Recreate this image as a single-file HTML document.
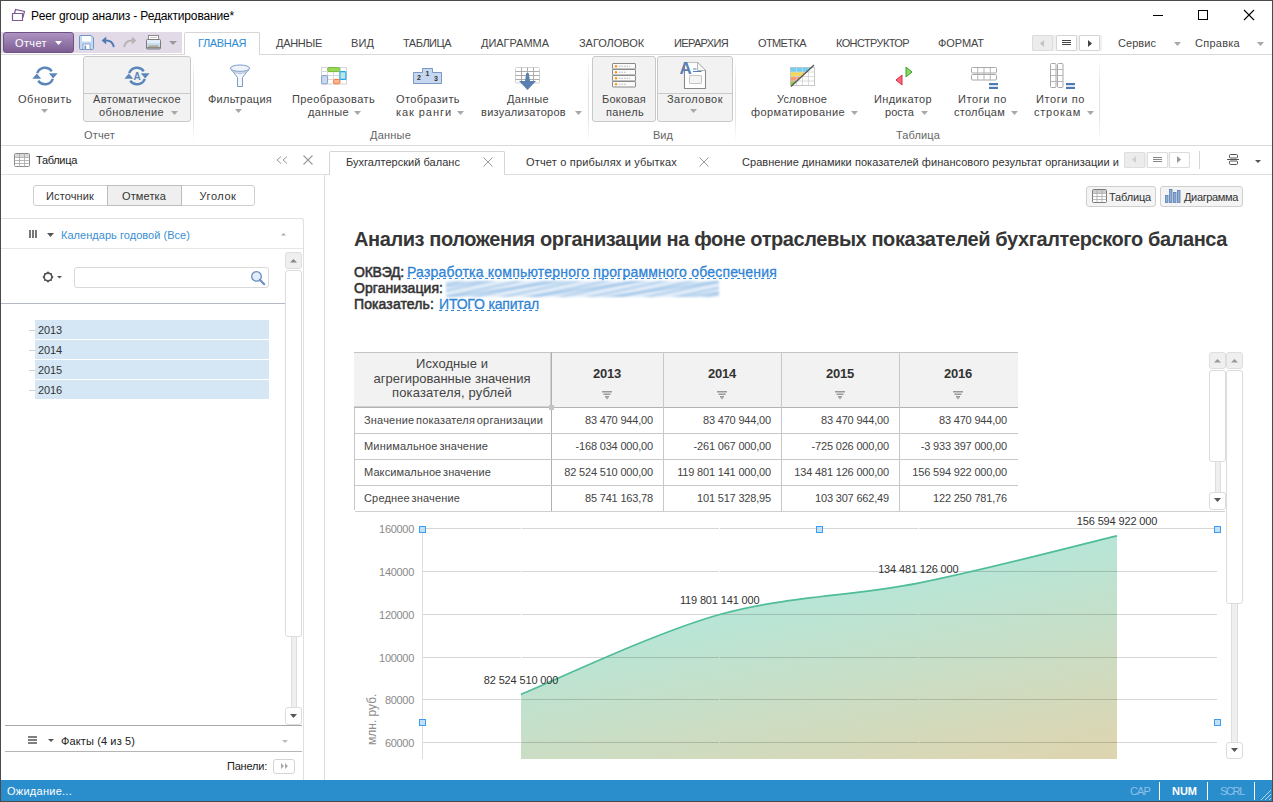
<!DOCTYPE html><html><head><meta charset='utf-8'><style>
*{margin:0;padding:0;box-sizing:border-box}
html,body{width:1273px;height:802px;overflow:hidden;background:#fff;font-family:"Liberation Sans",sans-serif}
.a{position:absolute}
.t{white-space:nowrap}
svg{overflow:visible}
</style></head><body>
<svg class="a" style="left:10px;top:7px" width="16" height="15" viewBox="0 0 16 15"><path d="M2.5 6.5h10v7h-10z" fill="none" stroke="#7d5a94" stroke-width="1.2"/><path d="M4.5 6.5l1-4 9 2-1.6 6" fill="none" stroke="#7d5a94" stroke-width="1.2"/></svg>
<div class="a t" style="left:31px;top:9.84px;font-size:12px;line-height:12px;color:#000;font-weight:400;"><span id="t1" style="letter-spacing:-0.161px">Peer group анализ - Редактирование*</span></div>
<div class="a" style="left:1153px;top:15px;width:10px;height:1px;background:#000"></div>
<div class="a" style="left:1198px;top:10px;width:10px;height:10px;border:1px solid #000"></div>
<svg class="a" style="left:1244px;top:10px" width="10" height="10" viewBox="0 0 10 10"><path d="M0 0L10 10M10 0L0 10" stroke="#000" stroke-width="1.1"/></svg>
<div class="a" style="left:1px;top:32px;width:181px;height:21px;background:#e3dae7"></div>
<div class="a" style="left:3px;top:32px;width:71px;height:21px;background:linear-gradient(#ad93c1,#7d5d93);border:1px solid #6f5285;border-radius:3px"></div>
<div class="a t" style="left:15px;top:37.69px;font-size:11px;line-height:11px;color:#fff;font-weight:400;"><span id="t2" style="letter-spacing:0.375px">Отчет</span></div>
<svg class="a" style="left:55px;top:41px" width="7" height="5" viewBox="0 0 7 5"><path d="M0 0H7L3.5 4.0Z" fill="#fff"/></svg>
<svg class="a" style="left:79px;top:35px" width="15" height="15" viewBox="0 0 15 15"><path d="M1.5 0.5H12L14.5 3V13.5Q14.5 14.5 13.5 14.5H1.5Q0.5 14.5 0.5 13.5V1.5Q0.5 0.5 1.5 0.5Z" fill="#c5d9f0" stroke="#6f95c6" stroke-width="1"/><rect x="3" y="1" width="9" height="5.5" fill="#fff"/><rect x="4" y="9" width="7" height="5.5" fill="#fff" stroke="#6f95c6" stroke-width="0.8"/><rect x="5.5" y="10.5" width="1.6" height="3.5" fill="#6f95c6"/></svg>
<svg class="a" style="left:101px;top:36px" width="14" height="12" viewBox="0 0 14 12"><path d="M12.8 11.2C12 6.5 9 4.2 4 4.6" fill="none" stroke="#4f7cb2" stroke-width="1.9"/><path d="M0.6 4.6L5.2 0.6V8.6Z" fill="#4f7cb2"/></svg>
<svg class="a" style="left:123px;top:36px" width="14" height="12" viewBox="0 0 14 12"><path d="M1.2 11.2C2 6.5 5 4.2 10 4.6" fill="none" stroke="#b5b5b5" stroke-width="1.9"/><path d="M13.4 4.6L8.8 0.6V8.6Z" fill="#b5b5b5"/></svg>
<svg class="a" style="left:146px;top:35px" width="15" height="15" viewBox="0 0 15 15"><rect x="2.5" y="0.5" width="10" height="5" fill="#fff" stroke="#8a8a8a"/><path d="M4 2.5H11" stroke="#ccc"/><rect x="0.5" y="4.5" width="14" height="9.5" rx="1" fill="#c9dcf2" stroke="#7a7a7a"/><rect x="1" y="5" width="13" height="3" fill="#e3edf9"/><rect x="2.5" y="10.5" width="10" height="1.2" fill="#a8946a"/><rect x="1" y="12" width="13" height="1.5" fill="#8d8d8d"/></svg>
<svg class="a" style="left:169px;top:41px" width="8" height="5" viewBox="0 0 8 5"><path d="M0 0H8L4.0 4.0Z" fill="#9a9a9a"/></svg>
<div class="a" style="left:1px;top:54px;width:1271px;height:1px;background:#dadada"></div>
<div class="a" style="left:184px;top:32px;width:76px;height:23px;background:#fff;border:1px solid #d6d6d6;border-bottom:none;border-radius:2px 2px 0 0"></div>
<div class="a t" style="left:198px;top:37.69px;font-size:11px;line-height:11px;color:#2d8bd2;font-weight:400;"><span id="t3" style="letter-spacing:-0.353px">ГЛАВНАЯ</span></div>
<div class="a t" style="left:276px;top:37.69px;font-size:11px;line-height:11px;color:#444;font-weight:400;"><span id="t4" style="letter-spacing:-0.292px">ДАННЫЕ</span></div>
<div class="a t" style="left:351px;top:37.69px;font-size:11px;line-height:11px;color:#444;font-weight:400;"><span id="t5" style="letter-spacing:0.099px">ВИД</span></div>
<div class="a t" style="left:403px;top:37.69px;font-size:11px;line-height:11px;color:#444;font-weight:400;"><span id="t6" style="letter-spacing:-0.502px">ТАБЛИЦА</span></div>
<div class="a t" style="left:481px;top:37.69px;font-size:11px;line-height:11px;color:#444;font-weight:400;"><span id="t7" style="letter-spacing:-0.030px">ДИАГРАММА</span></div>
<div class="a t" style="left:579px;top:37.69px;font-size:11px;line-height:11px;color:#444;font-weight:400;"><span id="t8" style="letter-spacing:-0.052px">ЗАГОЛОВОК</span></div>
<div class="a t" style="left:674px;top:37.69px;font-size:11px;line-height:11px;color:#444;font-weight:400;"><span id="t9" style="letter-spacing:-0.652px">ИЕРАРХИЯ</span></div>
<div class="a t" style="left:758px;top:37.69px;font-size:11px;line-height:11px;color:#444;font-weight:400;"><span id="t10" style="letter-spacing:-0.607px">ОТМЕТКА</span></div>
<div class="a t" style="left:836px;top:37.69px;font-size:11px;line-height:11px;color:#444;font-weight:400;"><span id="t11" style="letter-spacing:-0.609px">КОНСТРУКТОР</span></div>
<div class="a t" style="left:938px;top:37.69px;font-size:11px;line-height:11px;color:#444;font-weight:400;"><span id="t12" style="letter-spacing:-0.083px">ФОРМАТ</span></div>
<div class="a" style="left:1032px;top:35px;width:70px;height:16px;background:#f0f0f0"></div>
<div class="a" style="left:1032px;top:35px;width:21px;height:16px;background:#ececec;border:1px solid #dcdcdc;border-radius:2px"></div>
<div class="a" style="left:1056px;top:35px;width:21px;height:16px;background:#fff;border:1px solid #d4d4d4;border-radius:2px"></div>
<div class="a" style="left:1079px;top:35px;width:21px;height:16px;background:#fff;border:1px solid #d4d4d4;border-radius:2px"></div>
<svg class="a" style="left:1040px;top:40px" width="4" height="7" viewBox="0 0 4 7"><path d="M4 0V7L0 3.5Z" fill="#c4c4c4"/></svg>
<svg class="a" style="left:1062px;top:40px" width="9" height="6" viewBox="0 0 9 6"><path d="M0 0.5H9M0 2.5H9M0 4.5H9" stroke="#444" stroke-width="1"/></svg>
<svg class="a" style="left:1088px;top:40px" width="4" height="7" viewBox="0 0 4 7"><path d="M0 0V7L4 3.5Z" fill="#444"/></svg>
<div class="a t" style="left:1118px;top:37.69px;font-size:11px;line-height:11px;color:#444;font-weight:400;"><span id="t13" style="letter-spacing:0.055px">Сервис</span></div>
<svg class="a" style="left:1174px;top:42px" width="7" height="5" viewBox="0 0 7 5"><path d="M0 0H7L3.5 4.0Z" fill="#a8a8a8"/></svg>
<div class="a t" style="left:1195px;top:37.69px;font-size:11px;line-height:11px;color:#444;font-weight:400;"><span id="t14" style="letter-spacing:0.263px">Справка</span></div>
<svg class="a" style="left:1257px;top:42px" width="7" height="5" viewBox="0 0 7 5"><path d="M0 0H7L3.5 4.0Z" fill="#a8a8a8"/></svg>
<div class="a" style="left:1px;top:145px;width:1271px;height:1px;background:#dadada"></div>
<div class="a" style="left:193px;top:58px;width:1px;height:84px;background:linear-gradient(#fff,#e2e2e2 30%,#e2e2e2 70%,#fff)"></div>
<div class="a" style="left:588px;top:58px;width:1px;height:84px;background:linear-gradient(#fff,#e2e2e2 30%,#e2e2e2 70%,#fff)"></div>
<div class="a" style="left:735px;top:58px;width:1px;height:84px;background:linear-gradient(#fff,#e2e2e2 30%,#e2e2e2 70%,#fff)"></div>
<div class="a" style="left:1099px;top:58px;width:1px;height:84px;background:linear-gradient(#fff,#e2e2e2 30%,#e2e2e2 70%,#fff)"></div>
<svg class="a" style="left:32px;top:65px" width="26" height="22" viewBox="0 0 26 22"><path d="M5.20 8.16A8.3 8.3 0 0 1 19.80 6.24" fill="none" stroke="#5a86ba" stroke-width="2.4"/><path d="M20.80 13.84A8.3 8.3 0 0 1 6.20 15.76" fill="none" stroke="#5a86ba" stroke-width="2.4"/><path d="M16.8 8.2H25.6L21.2 13.6Z" fill="#5a86ba"/><path d="M0.4 13.8H9.2L4.8 8.4Z" fill="#5a86ba"/></svg>
<div class="a t" style="left:18px;top:93.69px;font-size:11px;line-height:11px;color:#444;font-weight:400;"><span id="t15" style="letter-spacing:0.523px">Обновить</span></div>
<svg class="a" style="left:41px;top:109px" width="7" height="5" viewBox="0 0 7 5"><path d="M0 0H7L3.5 4.0Z" fill="#a8a8a8"/></svg>
<div class="a" style="left:83px;top:56px;width:108px;height:66px;background:#f2f2f2;border:1px solid #c9c9c9;border-radius:3px"></div>
<div class="a" style="left:84px;top:93px;width:106px;height:1px;background:#c9c9c9"></div>
<svg class="a" style="left:124px;top:65px" width="26" height="22" viewBox="0 0 26 22"><path d="M5.20 8.16A8.3 8.3 0 0 1 19.80 6.24" fill="none" stroke="#5a86ba" stroke-width="2.4"/><path d="M20.80 13.84A8.3 8.3 0 0 1 6.20 15.76" fill="none" stroke="#5a86ba" stroke-width="2.4"/><path d="M16.8 8.2H25.6L21.2 13.6Z" fill="#5a86ba"/><path d="M0.4 13.8H9.2L4.8 8.4Z" fill="#5a86ba"/><text x="13" y="15" font-size="10" font-weight="700" text-anchor="middle" fill="#5a86ba" font-family="Liberation Sans">A</text></svg>
<div class="a t" style="left:93px;top:93.69px;font-size:11px;line-height:11px;color:#444;font-weight:400;"><span id="t16" style="letter-spacing:0.348px">Автоматическое</span></div>
<div class="a t" style="left:99px;top:106.69px;font-size:11px;line-height:11px;color:#444;font-weight:400;"><span id="t17" style="letter-spacing:0.392px">обновление</span></div>
<svg class="a" style="left:171px;top:111px" width="7" height="5" viewBox="0 0 7 5"><path d="M0 0H7L3.5 4.0Z" fill="#a8a8a8"/></svg>
<div class="a t" style="left:84px;top:129.69px;font-size:11px;line-height:11px;color:#666;font-weight:400;"><span id="t18" style="letter-spacing:0.175px">Отчет</span></div>
<svg class="a" style="left:229px;top:64px" width="22" height="24" viewBox="0 0 22 24"><path d="M1.5 4.5L8.5 13.5V22.5H13.5V13.5L20.5 4.5" fill="#f3f6fb" stroke="#7d9cc4" stroke-width="1"/><ellipse cx="11" cy="4.2" rx="9.5" ry="3.2" fill="#eef3fa" stroke="#7d9cc4" stroke-width="1"/><path d="M2.5 6.2Q11 10 19.5 6.2M4 8.3Q11 11 18 8.3" fill="none" stroke="#9fb6d6" stroke-width="0.8"/></svg>
<div class="a t" style="left:208px;top:93.69px;font-size:11px;line-height:11px;color:#444;font-weight:400;"><span id="t19" style="letter-spacing:0.252px">Фильтрация</span></div>
<svg class="a" style="left:235px;top:109px" width="7" height="5" viewBox="0 0 7 5"><path d="M0 0H7L3.5 4.0Z" fill="#a8a8a8"/></svg>
<svg class="a" style="left:320px;top:66px" width="27" height="19" viewBox="0 0 27 19"><rect x="1.5" y="1.5" width="25" height="16.5" fill="#fff" stroke="#d4d4d4"/><path d="M1.5 5.5H26.5M1.5 9.5H26.5M1.5 13.5H26.5M7.5 1.5V18M13.5 1.5V18M20 1.5V18" stroke="#dadada"/><rect x="7.8" y="1.6" width="12" height="4" rx="1" fill="#9ad85c" stroke="#6cb92c" stroke-width="0.9"/><rect x="19.9" y="5.6" width="6" height="7.8" rx="1" fill="#b9e6ec" stroke="#27a6ea" stroke-width="1.1"/><rect x="1.6" y="9.6" width="6" height="8.2" rx="1" fill="#c9d9ef" stroke="#7897c4" stroke-width="0.9"/><rect x="13.6" y="13.4" width="6.2" height="4.4" rx="1" fill="#fbb58f" stroke="#f2702e" stroke-width="0.9"/></svg>
<div class="a t" style="left:292px;top:93.69px;font-size:11px;line-height:11px;color:#444;font-weight:400;"><span id="t20" style="letter-spacing:0.379px">Преобразовать</span></div>
<div class="a t" style="left:308px;top:106.69px;font-size:11px;line-height:11px;color:#444;font-weight:400;"><span id="t21" style="letter-spacing:0.380px">данные</span></div>
<svg class="a" style="left:354px;top:111px" width="7" height="5" viewBox="0 0 7 5"><path d="M0 0H7L3.5 4.0Z" fill="#a8a8a8"/></svg>
<svg class="a" style="left:413px;top:68px" width="30" height="17" viewBox="0 0 30 17"><path d="M0.5 4.5H9.5V0.5H19.5V4.5H28.5V15.5H0.5Z" fill="#c6d7f0" stroke="#7b97c2" stroke-width="1"/><text x="4" y="12" font-size="7" font-weight="700" fill="#333" font-family="Liberation Sans">2</text><text x="12.5" y="8" font-size="7" font-weight="700" fill="#333" font-family="Liberation Sans">1</text><text x="21" y="13" font-size="7" font-weight="700" fill="#333" font-family="Liberation Sans">3</text></svg>
<div class="a t" style="left:396px;top:93.69px;font-size:11px;line-height:11px;color:#444;font-weight:400;"><span id="t22" style="letter-spacing:0.403px">Отобразить</span></div>
<div class="a t" style="left:396px;top:106.69px;font-size:11px;line-height:11px;color:#444;font-weight:400;"><span id="t23" style="letter-spacing:0.943px">как ранги</span></div>
<svg class="a" style="left:457px;top:111px" width="7" height="5" viewBox="0 0 7 5"><path d="M0 0H7L3.5 4.0Z" fill="#a8a8a8"/></svg>
<svg class="a" style="left:515px;top:67px" width="26" height="25" viewBox="0 0 26 25"><rect x="0.5" y="0.5" width="24" height="15.5" rx="1" fill="#fff" stroke="#d2d2d2"/><path d="M0.5 4.5H24.5M0.5 8.5H24.5M0.5 12.5H24.5M6.5 0.5V16M12.5 0.5V16M18.5 0.5V16" stroke="#acacac"/><path d="M11.3 6H13.7L15 14H21L12.5 23L4 14H10Z" fill="#5a80b2"/></svg>
<div class="a t" style="left:507px;top:93.69px;font-size:11px;line-height:11px;color:#444;font-weight:400;"><span id="t24" style="letter-spacing:0.375px">Данные</span></div>
<div class="a t" style="left:481px;top:106.69px;font-size:11px;line-height:11px;color:#444;font-weight:400;"><span id="t25" style="letter-spacing:0.286px">визуализаторов</span></div>
<svg class="a" style="left:575px;top:111px" width="7" height="5" viewBox="0 0 7 5"><path d="M0 0H7L3.5 4.0Z" fill="#a8a8a8"/></svg>
<div class="a t" style="left:370px;top:129.69px;font-size:11px;line-height:11px;color:#666;font-weight:400;"><span id="t26" style="letter-spacing:0.208px">Данные</span></div>
<div class="a" style="left:592px;top:56px;width:64px;height:66px;background:#f2f2f2;border:1px solid #c9c9c9;border-radius:3px"></div>
<div class="a" style="left:657px;top:56px;width:76px;height:66px;background:#f2f2f2;border:1px solid #c9c9c9;border-radius:3px"></div>
<div class="a" style="left:658px;top:93px;width:74px;height:1px;background:#c9c9c9"></div>
<svg class="a" style="left:612px;top:63px" width="24" height="25" viewBox="0 0 24 25"><rect x="0.5" y="0.5" width="23" height="5.5" rx="0.5" fill="#fafafa" stroke="#8a8a8a" stroke-width="1"/><circle cx="4" cy="3.25" r="1.2" fill="#f39a1b"/><path d="M7 3.25H18" stroke="#aaa" stroke-width="0.8" stroke-dasharray="1.5 1"/><rect x="0.5" y="6.5" width="23" height="5.5" rx="0.5" fill="#fafafa" stroke="#8a8a8a" stroke-width="1"/><circle cx="4" cy="9.25" r="1.2" fill="#f39a1b"/><path d="M7 9.25H14" stroke="#aaa" stroke-width="0.8" stroke-dasharray="1.5 1"/><rect x="0.5" y="12.5" width="23" height="5.5" rx="0.5" fill="#fafafa" stroke="#8a8a8a" stroke-width="1"/><circle cx="4" cy="15.25" r="1.2" fill="#f39a1b"/><path d="M7 15.25H18" stroke="#aaa" stroke-width="0.8" stroke-dasharray="1.5 1"/><rect x="0.5" y="18.5" width="23" height="5.5" rx="0.5" fill="#fafafa" stroke="#8a8a8a" stroke-width="1"/><circle cx="4" cy="21.25" r="1.2" fill="#f39a1b"/><path d="M7 21.25H14" stroke="#aaa" stroke-width="0.8" stroke-dasharray="1.5 1"/></svg>
<svg class="a" style="left:679px;top:61px" width="28" height="29" viewBox="0 0 28 29"><path d="M5.5 1.5H18.5L26.5 9.5V27.5H5.5Z" fill="#fff" stroke="#8a8a8a" stroke-width="1.1"/><path d="M5.5 1.5H18.5" stroke="#c4c4c4" stroke-width="1.2"/><path d="M18.5 1.5V9.5H26.5" fill="#f7f7f7" stroke="#b5b5b5"/><rect x="10.5" y="14.5" width="12" height="8" rx="0.5" fill="#f4f4f4" stroke="#c6c6c6"/><text x="0.6" y="12.7" font-size="17" font-weight="700" fill="#5a80b2" font-family="Liberation Sans">A</text><path d="M14 8H17.5M14 10.5H22.5" stroke="#5a80b2" stroke-width="1.1"/></svg>
<div class="a t" style="left:602px;top:93.69px;font-size:11px;line-height:11px;color:#444;font-weight:400;"><span id="t27" style="letter-spacing:0.259px">Боковая</span></div>
<div class="a t" style="left:606px;top:106.69px;font-size:11px;line-height:11px;color:#444;font-weight:400;"><span id="t28" style="letter-spacing:0.323px">панель</span></div>
<div class="a t" style="left:667px;top:93.69px;font-size:11px;line-height:11px;color:#444;font-weight:400;"><span id="t29" style="letter-spacing:0.476px">Заголовок</span></div>
<svg class="a" style="left:690px;top:109px" width="7" height="5" viewBox="0 0 7 5"><path d="M0 0H7L3.5 4.0Z" fill="#a8a8a8"/></svg>
<div class="a t" style="left:653px;top:129.69px;font-size:11px;line-height:11px;color:#666;font-weight:400;"><span id="t30" style="letter-spacing:0.031px">Вид</span></div>
<svg class="a" style="left:789px;top:64px" width="27" height="23" viewBox="0 0 27 23"><defs><clipPath id="cfc"><path d="M1.5 3.5H23.5L1.5 22.5Z"/></clipPath></defs><rect x="1.5" y="3.5" width="24" height="18" fill="#fff" stroke="#c6c6c6"/><g clip-path="url(#cfc)"><rect x="1.5" y="3.5" width="24" height="4.5" fill="#6fd0f3"/><rect x="1.5" y="8" width="24" height="4.5" fill="#f5da55"/><rect x="1.5" y="12.5" width="24" height="4.5" fill="#f89b70"/><rect x="1.5" y="17" width="24" height="4.5" fill="#8fc94a"/></g><path d="M1.5 8H25.5M1.5 12.5H25.5M1.5 17H25.5M7.5 3.5V21.5M13.5 3.5V21.5M19.5 3.5V21.5" stroke="#d0d0d0" stroke-width="0.8"/><path d="M2 22.5L25 1" stroke="#555" stroke-width="1.3"/></svg>
<div class="a t" style="left:777px;top:93.69px;font-size:11px;line-height:11px;color:#444;font-weight:400;"><span id="t31" style="letter-spacing:0.178px">Условное</span></div>
<div class="a t" style="left:751px;top:106.69px;font-size:11px;line-height:11px;color:#444;font-weight:400;"><span id="t32" style="letter-spacing:0.405px">форматирование</span></div>
<svg class="a" style="left:851px;top:111px" width="7" height="5" viewBox="0 0 7 5"><path d="M0 0H7L3.5 4.0Z" fill="#a8a8a8"/></svg>
<svg class="a" style="left:895px;top:66px" width="18" height="20" viewBox="0 0 18 20"><path d="M7 9V19L1 14Z" fill="#f36b7a" stroke="#d92c42" stroke-width="1"/><path d="M11 1V11L17 6Z" fill="#8bd36a" stroke="#3da42c" stroke-width="1"/></svg>
<div class="a t" style="left:874px;top:93.69px;font-size:11px;line-height:11px;color:#444;font-weight:400;"><span id="t33" style="letter-spacing:0.375px">Индикатор</span></div>
<div class="a t" style="left:885px;top:106.69px;font-size:11px;line-height:11px;color:#444;font-weight:400;"><span id="t34" style="letter-spacing:0.044px">роста</span></div>
<svg class="a" style="left:921px;top:111px" width="7" height="5" viewBox="0 0 7 5"><path d="M0 0H7L3.5 4.0Z" fill="#a8a8a8"/></svg>
<svg class="a" style="left:970px;top:66px" width="30" height="24" viewBox="0 0 30 24"><g fill="#fff" stroke="#a8a8a8" stroke-width="1"><rect x="1.5" y="1.5" width="25" height="5.5" rx="1"/><rect x="1.5" y="8.5" width="25" height="5.5" rx="1"/></g><path d="M7.75 1.5V14M14 1.5V14M20.25 1.5V14" stroke="#b5b5b5"/><rect x="19" y="17" width="9" height="2.2" fill="#4f79b1"/><rect x="19" y="20.8" width="9" height="2.2" fill="#4f79b1"/></svg>
<div class="a t" style="left:958px;top:93.69px;font-size:11px;line-height:11px;color:#444;font-weight:400;"><span id="t35" style="letter-spacing:0.596px">Итоги по</span></div>
<div class="a t" style="left:954px;top:106.69px;font-size:11px;line-height:11px;color:#444;font-weight:400;"><span id="t36" style="letter-spacing:0.250px">столбцам</span></div>
<svg class="a" style="left:1011px;top:111px" width="7" height="5" viewBox="0 0 7 5"><path d="M0 0H7L3.5 4.0Z" fill="#a8a8a8"/></svg>
<svg class="a" style="left:1049px;top:62px" width="28" height="28" viewBox="0 0 28 28"><g fill="#fff" stroke="#a8a8a8" stroke-width="1"><rect x="1.5" y="1.5" width="5.5" height="24" rx="1"/><rect x="8.5" y="1.5" width="5.5" height="24" rx="1"/></g><path d="M1.5 7.5H14M1.5 13.5H14M1.5 19.5H14" stroke="#b5b5b5"/><rect x="17" y="21" width="9" height="2.2" fill="#4f79b1"/><rect x="17" y="24.8" width="9" height="2.2" fill="#4f79b1"/></svg>
<div class="a t" style="left:1036px;top:93.69px;font-size:11px;line-height:11px;color:#444;font-weight:400;"><span id="t37" style="letter-spacing:0.596px">Итоги по</span></div>
<div class="a t" style="left:1034px;top:106.69px;font-size:11px;line-height:11px;color:#444;font-weight:400;"><span id="t38" style="letter-spacing:0.783px">строкам</span></div>
<svg class="a" style="left:1087px;top:111px" width="7" height="5" viewBox="0 0 7 5"><path d="M0 0H7L3.5 4.0Z" fill="#a8a8a8"/></svg>
<div class="a t" style="left:896px;top:129.69px;font-size:11px;line-height:11px;color:#666;font-weight:400;"><span id="t39" style="letter-spacing:0.123px">Таблица</span></div>
<svg class="a" style="left:14px;top:153px" width="16" height="14" viewBox="0 0 16 14"><rect x="0.5" y="0.5" width="15" height="13" rx="1" fill="#fff" stroke="#8c8c8c"/><rect x="1" y="1" width="14" height="3" fill="#d9d9d9"/><path d="M0.5 4.5H15.5M0.5 7.5H15.5M0.5 10.5H15.5M5.5 0.5V13.5M10.5 0.5V13.5" stroke="#a6a6a6" stroke-width="0.8"/></svg>
<div class="a t" style="left:36px;top:154.69px;font-size:11px;line-height:11px;color:#222;font-weight:400;"><span id="t40" style="letter-spacing:-0.306px">Таблица</span></div>
<svg class="a" style="left:276px;top:156px" width="12" height="8" viewBox="0 0 12 8"><path d="M5 0.5L1 4L5 7.5M11 0.5L7 4L11 7.5" fill="none" stroke="#9a9a9a" stroke-width="1"/></svg>
<svg class="a" style="left:303px;top:155px" width="10" height="10" viewBox="0 0 10 10"><path d="M0.5 0.5L9.5 9.5M9.5 0.5L0.5 9.5" stroke="#9a9a9a" stroke-width="1.1"/></svg>
<div class="a" style="left:1px;top:174px;width:324px;height:1px;background:#e2e2e2"></div>
<div class="a" style="left:324px;top:175px;width:1px;height:605px;background:#dcdcdc"></div>
<div class="a" style="left:33px;top:185px;width:222px;height:21px;background:#fff;border:1px solid #cfcfcf;border-radius:3px"></div>
<div class="a" style="left:107px;top:185px;width:75px;height:21px;background:#efefef;border:1px solid #bdbdbd"></div>
<div class="a t" style="left:-230px;width:600px;text-align:center;top:190.69px;font-size:11px;line-height:11px;color:#333;font-weight:400;"><span id="t41" style="letter-spacing:0.129px">Источник</span></div>
<div class="a t" style="left:-156px;width:600px;text-align:center;top:190.69px;font-size:11px;line-height:11px;color:#333;font-weight:400;"><span id="t42" style="letter-spacing:0.125px">Отметка</span></div>
<div class="a t" style="left:-82px;width:600px;text-align:center;top:190.69px;font-size:11px;line-height:11px;color:#333;font-weight:400;"><span id="t43" style="letter-spacing:0.562px">Уголок</span></div>
<div class="a" style="left:1px;top:218px;width:303px;height:562px;border:1px solid #e0e0e0;border-left:none;border-bottom:none;border-radius:0 3px 0 0"></div>
<svg class="a" style="left:29px;top:230px" width="8" height="9" viewBox="0 0 8 9"><path d="M1 0V8M4 0V8M7 0V8" stroke="#555" stroke-width="1.6"/></svg>
<svg class="a" style="left:47px;top:233px" width="7" height="5" viewBox="0 0 7 5"><path d="M0 0H7L3.5 4.0Z" fill="#555"/></svg>
<div class="a t" style="left:61px;top:229.69px;font-size:11px;line-height:11px;color:#3a8fd2;font-weight:400;"><span id="t44" style="letter-spacing:0.039px">Календарь годовой (Все)</span></div>
<svg class="a" style="left:281px;top:233px" width="5" height="3" viewBox="0 0 5 3"><path d="M0 2.5H5L2.5 0Z" fill="#aaa"/></svg>
<div class="a" style="left:1px;top:248px;width:302px;height:1px;background:#e6e6e6"></div>
<svg class="a" style="left:42px;top:271px" width="12" height="12" viewBox="0 0 12 12"><circle cx="6" cy="6" r="3.9" fill="none" stroke="#555" stroke-width="1.7"/><g fill="#555"><circle cx="6" cy="1.6" r="1"/><circle cx="6" cy="10.4" r="1"/><circle cx="1.6" cy="6" r="1"/><circle cx="10.4" cy="6" r="1"/><circle cx="2.9" cy="2.9" r="0.9"/><circle cx="9.1" cy="2.9" r="0.9"/><circle cx="2.9" cy="9.1" r="0.9"/><circle cx="9.1" cy="9.1" r="0.9"/></g></svg>
<svg class="a" style="left:57px;top:276px" width="5" height="3" viewBox="0 0 5 3"><path d="M0 0H5L2.5 2.5Z" fill="#555"/></svg>
<div class="a" style="left:74px;top:267px;width:195px;height:21px;background:#fff;border:1px solid #d9d9d9;border-radius:3px"></div>
<svg class="a" style="left:250px;top:270px" width="16" height="16" viewBox="0 0 16 16"><circle cx="6.5" cy="6.4" r="4.8" fill="#e3edf9" stroke="#6a8fc0" stroke-width="1.3"/><path d="M10 10L14.2 14.2" stroke="#6a8fc0" stroke-width="2.2" stroke-linecap="round"/></svg>
<div class="a" style="left:1px;top:303px;width:284px;height:1px;background:#b3bac4"></div>
<div class="a" style="left:285px;top:252px;width:17px;height:17px;background:#efefef;border:1px solid #dedede;border-radius:3px"></div>
<svg class="a" style="left:290px;top:259px" width="7" height="4" viewBox="0 0 7 4"><path d="M0 3.5H7L3.5 0Z" fill="#888"/></svg>
<div class="a" style="left:291px;top:636px;width:6px;height:72px;background:#efefef;border-left:1px solid #dedede;border-right:1px solid #dedede"></div>
<div class="a" style="left:285px;top:270px;width:17px;height:367px;background:#fff;border:1px solid #dcdcdc;border-radius:3px"></div>
<div class="a" style="left:285px;top:707px;width:17px;height:18px;background:#fff;border:1px solid #dcdcdc;border-radius:3px"></div>
<svg class="a" style="left:290px;top:714px" width="7" height="5" viewBox="0 0 7 5"><path d="M0 0H7L3.5 4.0Z" fill="#555"/></svg>
<div class="a" style="left:29px;top:330px;width:6px;height:1px;background:#d0d0d0"></div>
<div class="a" style="left:35px;top:320px;width:234px;height:19px;background:#d5e7f5"></div>
<div class="a t" style="left:38px;top:324.69px;font-size:11px;line-height:11px;color:#333;font-weight:400;"><span id="t45" style="letter-spacing:-0.121px">2013</span></div>
<div class="a" style="left:29px;top:350px;width:6px;height:1px;background:#d0d0d0"></div>
<div class="a" style="left:35px;top:340px;width:234px;height:19px;background:#d5e7f5"></div>
<div class="a t" style="left:38px;top:344.69px;font-size:11px;line-height:11px;color:#333;font-weight:400;"><span id="t46" style="letter-spacing:-0.121px">2014</span></div>
<div class="a" style="left:29px;top:370px;width:6px;height:1px;background:#d0d0d0"></div>
<div class="a" style="left:35px;top:360px;width:234px;height:19px;background:#d5e7f5"></div>
<div class="a t" style="left:38px;top:364.69px;font-size:11px;line-height:11px;color:#333;font-weight:400;"><span id="t47" style="letter-spacing:-0.121px">2015</span></div>
<div class="a" style="left:29px;top:390px;width:6px;height:1px;background:#d0d0d0"></div>
<div class="a" style="left:35px;top:380px;width:234px;height:19px;background:#d5e7f5"></div>
<div class="a t" style="left:38px;top:384.69px;font-size:11px;line-height:11px;color:#333;font-weight:400;"><span id="t48" style="letter-spacing:-0.121px">2016</span></div>
<div class="a" style="left:5px;top:725px;width:297px;height:1px;background:#a8a8a8"></div>
<svg class="a" style="left:28px;top:736px" width="9" height="8" viewBox="0 0 9 8"><path d="M0 1H9M0 4H9M0 7H9" stroke="#555" stroke-width="1.6"/></svg>
<svg class="a" style="left:48px;top:739px" width="6" height="4" viewBox="0 0 6 4"><path d="M0 0H6L3.0 3.0Z" fill="#555"/></svg>
<div class="a t" style="left:61px;top:735.69px;font-size:11px;line-height:11px;color:#222;font-weight:400;"><span id="t49" style="letter-spacing:0.123px">Факты (4 из 5)</span></div>
<svg class="a" style="left:282px;top:740px" width="6" height="4" viewBox="0 0 6 4"><path d="M0 0H6L3.0 3.0Z" fill="#bbb"/></svg>
<div class="a" style="left:5px;top:751px;width:297px;height:1px;background:#b5b5b5"></div>
<div class="a t" style="left:227px;top:760.69px;font-size:11px;line-height:11px;color:#222;font-weight:400;"><span id="t50" style="letter-spacing:-0.212px">Панели:</span></div>
<div class="a" style="left:273px;top:759px;width:22px;height:15px;background:#fff;border:1px solid #d4d4d4;border-radius:3px"></div>
<svg class="a" style="left:281px;top:763px" width="8" height="6" viewBox="0 0 8 6"><path d="M0 0V6L3 3ZM4 0V6L7 3Z" fill="#aaa"/></svg>
<div class="a" style="left:325px;top:174px;width:947px;height:1px;background:#dcdcdc"></div>
<div class="a" style="left:329px;top:151px;width:176px;height:24px;background:#fff;border:1px solid #d6d6d6;border-bottom:none;border-radius:2px 2px 0 0"></div>
<div class="a t" style="left:346px;top:156.69px;font-size:11px;line-height:11px;color:#333;font-weight:400;"><span id="t51" style="letter-spacing:0.031px">Бухгалтерский баланс</span></div>
<svg class="a" style="left:483px;top:157px" width="10" height="10" viewBox="0 0 10 10"><path d="M0.5 0.5L9.5 9.5M9.5 0.5L0.5 9.5" stroke="#9a9a9a" stroke-width="1"/></svg>
<div class="a t" style="left:526px;top:156.69px;font-size:11px;line-height:11px;color:#333;font-weight:400;"><span id="t52" style="letter-spacing:0.175px">Отчет о прибылях и убытках</span></div>
<svg class="a" style="left:699px;top:157px" width="10" height="10" viewBox="0 0 10 10"><path d="M0.5 0.5L9.5 9.5M9.5 0.5L0.5 9.5" stroke="#9a9a9a" stroke-width="1"/></svg>
<div class="a t" style="left:742px;top:156.69px;font-size:11px;line-height:11px;color:#333;font-weight:400;"><span id="t53" style="letter-spacing:0.043px">Сравнение динамики показателей финансового результат организации и</span></div>
<div class="a" style="left:1124px;top:152px;width:66px;height:16px;background:#f0f0f0"></div>
<div class="a" style="left:1124px;top:152px;width:21px;height:16px;background:#ececec;border:1px solid #dedede;border-radius:2px"></div>
<div class="a" style="left:1147px;top:152px;width:21px;height:16px;background:#fff;border:1px solid #dcdcdc;border-radius:2px"></div>
<div class="a" style="left:1169px;top:152px;width:21px;height:16px;background:#fff;border:1px solid #dcdcdc;border-radius:2px"></div>
<svg class="a" style="left:1132px;top:156px" width="4" height="7" viewBox="0 0 4 7"><path d="M4 0V7L0 3.5Z" fill="#d0d0d0"/></svg>
<svg class="a" style="left:1153px;top:157px" width="9" height="6" viewBox="0 0 9 6"><path d="M0 0.5H9M0 2.5H9M0 4.5H9" stroke="#888" stroke-width="1"/></svg>
<svg class="a" style="left:1177px;top:156px" width="4" height="7" viewBox="0 0 4 7"><path d="M0 0V7L4 3.5Z" fill="#999"/></svg>
<div class="a" style="left:1199px;top:151px;width:1px;height:18px;background:#d6d6d6"></div>
<svg class="a" style="left:1227px;top:154px" width="12" height="11" viewBox="0 0 12 11"><rect x="2.5" y="0.5" width="8" height="3.5" rx="1" fill="none" stroke="#555"/><rect x="2.5" y="7" width="8" height="3.5" rx="1" fill="none" stroke="#555"/><path d="M0 5.5H12" stroke="#555"/></svg>
<svg class="a" style="left:1255px;top:160px" width="6" height="4" viewBox="0 0 6 4"><path d="M0 0H6L3.0 3.0Z" fill="#555"/></svg>
<div class="a" style="left:1086px;top:186px;width:70px;height:21px;background:#f4f4f4;border:1px solid #cfcfcf;border-radius:3px"></div>
<svg class="a" style="left:1092px;top:189px" width="15" height="14" viewBox="0 0 15 14"><rect x="0.5" y="0.5" width="14" height="13" rx="1" fill="#fff" stroke="#777"/><rect x="1" y="1" width="13" height="3" fill="#ccc"/><path d="M0.5 4.5H14.5M0.5 7.5H14.5M0.5 10.5H14.5M5 0.5V13.5M10 0.5V13.5" stroke="#aaa" stroke-width="0.8"/></svg>
<div class="a t" style="left:1109px;top:191.69px;font-size:11px;line-height:11px;color:#333;font-weight:400;"><span id="t54" style="letter-spacing:-0.163px">Таблица</span></div>
<div class="a" style="left:1160px;top:186px;width:83px;height:21px;background:#f4f4f4;border:1px solid #cfcfcf;border-radius:3px"></div>
<svg class="a" style="left:1165px;top:189px" width="16" height="14" viewBox="0 0 16 14"><g fill="#8eacd3" stroke="#5a80b5" stroke-width="0.8"><rect x="0.5" y="6.5" width="2.5" height="7"/><rect x="4.5" y="0.5" width="2.5" height="13"/><rect x="8.5" y="3.5" width="2.5" height="10"/><rect x="12.5" y="1.5" width="2.5" height="12"/></g></svg>
<div class="a t" style="left:1184px;top:191.69px;font-size:11px;line-height:11px;color:#333;font-weight:400;"><span id="t55" style="letter-spacing:-0.356px">Диаграмма</span></div>
<div class="a t" style="left:354px;top:229.07px;font-size:20px;line-height:20px;color:#363636;font-weight:700;"><span id="t56" style="letter-spacing:-0.409px">Анализ положения организации на фоне отраслевых показателей бухгалтерского баланса</span></div>
<div class="a t" style="left:354px;top:265.15px;font-size:14px;line-height:14px;color:#333;font-weight:400;-webkit-text-stroke:0.55px #333"><span id="t57" style="letter-spacing:-0.227px">ОКВЭД:</span></div>
<div class="a t" style="left:407px;top:265.15px;font-size:14px;line-height:14px;color:#2f84d6;font-weight:400;-webkit-text-stroke:0.3px #2f84d6"><span id="t58" style="letter-spacing:0.210px">Разработка компьютерного программного обеспечения</span></div>
<div class="a" style="left:407px;top:278px;width:370px;height:1px;background:repeating-linear-gradient(90deg,#3a87d4 0 3px,transparent 3px 6px)"></div>
<div class="a t" style="left:354px;top:281.15px;font-size:14px;line-height:14px;color:#333;font-weight:400;-webkit-text-stroke:0.55px #333"><span id="t59" style="letter-spacing:0.056px">Организация:</span></div>
<div class="a" style="left:446px;top:281px;width:273px;height:16px;background:repeating-linear-gradient(-12deg,rgba(120,175,225,0) 0 1.5px,rgba(120,175,225,.5) 2.5px 3.5px,rgba(120,175,225,0) 4.5px 6px),repeating-linear-gradient(-8deg,rgba(80,150,215,0) 0 3px,rgba(80,150,215,.35) 4px 5px,rgba(80,150,215,0) 6px 11px),#e3edf8;filter:blur(0.9px)"></div>
<div class="a t" style="left:354px;top:297.15px;font-size:14px;line-height:14px;color:#333;font-weight:400;-webkit-text-stroke:0.55px #333"><span id="t60" style="letter-spacing:0.114px">Показатель:</span></div>
<div class="a t" style="left:439px;top:297.15px;font-size:14px;line-height:14px;color:#2f84d6;font-weight:400;-webkit-text-stroke:0.3px #2f84d6"><span id="t61" style="letter-spacing:-0.175px">ИТОГО капитал</span></div>
<div class="a" style="left:439px;top:310px;width:100px;height:1px;background:repeating-linear-gradient(90deg,#3a87d4 0 3px,transparent 3px 6px)"></div>
<div class="a" style="left:354px;top:352px;width:664px;height:55px;background:#f2f2f2"></div>
<div class="a" style="left:354px;top:352px;width:664px;height:1px;background:#c4c4c4"></div>
<div class="a" style="left:354px;top:406px;width:195px;height:1px;background:#d2d2d2"></div>
<div class="a" style="left:354px;top:407px;width:664px;height:1px;background:#b3b3b3"></div>
<div class="a" style="left:354px;top:408px;width:1px;height:102px;background:#c6c6c6"></div>
<div class="a" style="left:550px;top:352px;width:1px;height:53px;background:#d2d2d2"></div>
<div class="a" style="left:551px;top:352px;width:1px;height:159px;background:#b0b0b0"></div>
<div class="a" style="left:663px;top:352px;width:1px;height:159px;background:#c8c8c8"></div>
<div class="a" style="left:781px;top:352px;width:1px;height:159px;background:#c8c8c8"></div>
<div class="a" style="left:899px;top:352px;width:1px;height:159px;background:#c8c8c8"></div>
<div class="a" style="left:354px;top:433px;width:664px;height:1px;background:#c8c8c8"></div>
<div class="a" style="left:354px;top:459px;width:664px;height:1px;background:#c8c8c8"></div>
<div class="a" style="left:354px;top:485px;width:664px;height:1px;background:#c8c8c8"></div>
<div class="a" style="left:549px;top:405px;width:5px;height:5px;background:#c4c4c4"></div>
<div class="a t" style="left:152px;width:600px;text-align:center;top:357.00px;font-size:13px;line-height:13px;color:#444;font-weight:400;"><span id="t62" style="letter-spacing:0.064px">Исходные и</span></div>
<div class="a t" style="left:152px;width:600px;text-align:center;top:372.00px;font-size:13px;line-height:13px;color:#444;font-weight:400;"><span id="t63" style="">агрегированные значения</span></div>
<div class="a t" style="left:152px;width:600px;text-align:center;top:386.00px;font-size:13px;line-height:13px;color:#444;font-weight:400;"><span id="t64" style="letter-spacing:0.147px">показателя, рублей</span></div>
<div class="a t" style="left:307px;width:600px;text-align:center;top:367.00px;font-size:13px;line-height:13px;color:#333;font-weight:700;"><span id="t65" style="letter-spacing:-0.230px">2013</span></div>
<svg class="a" style="left:602px;top:391px" width="10" height="9" viewBox="0 0 10 9"><path d="M0 0.75H10M1.5 3.25H8.5M3 5.75H7" stroke="#999" stroke-width="1.5"/><path d="M3.5 6.5H6.5L5 8.5Z" fill="#999"/></svg>
<div class="a t" style="left:422px;width:600px;text-align:center;top:367.00px;font-size:13px;line-height:13px;color:#333;font-weight:700;"><span id="t66" style="letter-spacing:-0.230px">2014</span></div>
<svg class="a" style="left:717px;top:391px" width="10" height="9" viewBox="0 0 10 9"><path d="M0 0.75H10M1.5 3.25H8.5M3 5.75H7" stroke="#999" stroke-width="1.5"/><path d="M3.5 6.5H6.5L5 8.5Z" fill="#999"/></svg>
<div class="a t" style="left:540px;width:600px;text-align:center;top:367.00px;font-size:13px;line-height:13px;color:#333;font-weight:700;"><span id="t67" style="letter-spacing:-0.230px">2015</span></div>
<svg class="a" style="left:835px;top:391px" width="10" height="9" viewBox="0 0 10 9"><path d="M0 0.75H10M1.5 3.25H8.5M3 5.75H7" stroke="#999" stroke-width="1.5"/><path d="M3.5 6.5H6.5L5 8.5Z" fill="#999"/></svg>
<div class="a t" style="left:658px;width:600px;text-align:center;top:367.00px;font-size:13px;line-height:13px;color:#333;font-weight:700;"><span id="t68" style="letter-spacing:-0.230px">2016</span></div>
<svg class="a" style="left:953px;top:391px" width="10" height="9" viewBox="0 0 10 9"><path d="M0 0.75H10M1.5 3.25H8.5M3 5.75H7" stroke="#999" stroke-width="1.5"/><path d="M3.5 6.5H6.5L5 8.5Z" fill="#999"/></svg>
<div class="a t" style="left:364px;top:414.69px;font-size:11px;line-height:11px;color:#444;font-weight:400;word-spacing:-1.5px"><span id="t69" style="letter-spacing:0.191px">Значение показателя организации</span></div>
<div class="a t" style="left:53px;width:600px;text-align:right;top:414.69px;font-size:11px;line-height:11px;color:#444;font-weight:400;letter-spacing:-0.18px"><span id="t70" style="">83 470 944,00</span></div>
<div class="a t" style="left:171px;width:600px;text-align:right;top:414.69px;font-size:11px;line-height:11px;color:#444;font-weight:400;letter-spacing:-0.18px"><span id="t71" style="">83 470 944,00</span></div>
<div class="a t" style="left:289px;width:600px;text-align:right;top:414.69px;font-size:11px;line-height:11px;color:#444;font-weight:400;letter-spacing:-0.18px"><span id="t72" style="">83 470 944,00</span></div>
<div class="a t" style="left:407px;width:600px;text-align:right;top:414.69px;font-size:11px;line-height:11px;color:#444;font-weight:400;letter-spacing:-0.18px"><span id="t73" style="">83 470 944,00</span></div>
<div class="a t" style="left:364px;top:440.69px;font-size:11px;line-height:11px;color:#444;font-weight:400;word-spacing:-1.5px"><span id="t74" style="letter-spacing:0.180px">Минимальное значение</span></div>
<div class="a t" style="left:53px;width:600px;text-align:right;top:440.69px;font-size:11px;line-height:11px;color:#444;font-weight:400;letter-spacing:-0.18px"><span id="t75" style="">-168 034 000,00</span></div>
<div class="a t" style="left:171px;width:600px;text-align:right;top:440.69px;font-size:11px;line-height:11px;color:#444;font-weight:400;letter-spacing:-0.18px"><span id="t76" style="">-261 067 000,00</span></div>
<div class="a t" style="left:289px;width:600px;text-align:right;top:440.69px;font-size:11px;line-height:11px;color:#444;font-weight:400;letter-spacing:-0.18px"><span id="t77" style="">-725 026 000,00</span></div>
<div class="a t" style="left:407px;width:600px;text-align:right;top:440.69px;font-size:11px;line-height:11px;color:#444;font-weight:400;letter-spacing:-0.18px"><span id="t78" style="">-3 933 397 000,00</span></div>
<div class="a t" style="left:364px;top:466.69px;font-size:11px;line-height:11px;color:#444;font-weight:400;word-spacing:-1.5px"><span id="t79" style="letter-spacing:0.101px">Максимальное значение</span></div>
<div class="a t" style="left:53px;width:600px;text-align:right;top:466.69px;font-size:11px;line-height:11px;color:#444;font-weight:400;letter-spacing:-0.18px"><span id="t80" style="">82 524 510 000,00</span></div>
<div class="a t" style="left:171px;width:600px;text-align:right;top:466.69px;font-size:11px;line-height:11px;color:#444;font-weight:400;letter-spacing:-0.18px"><span id="t81" style="">119 801 141 000,00</span></div>
<div class="a t" style="left:289px;width:600px;text-align:right;top:466.69px;font-size:11px;line-height:11px;color:#444;font-weight:400;letter-spacing:-0.18px"><span id="t82" style="">134 481 126 000,00</span></div>
<div class="a t" style="left:407px;width:600px;text-align:right;top:466.69px;font-size:11px;line-height:11px;color:#444;font-weight:400;letter-spacing:-0.18px"><span id="t83" style="">156 594 922 000,00</span></div>
<div class="a t" style="left:364px;top:492.69px;font-size:11px;line-height:11px;color:#444;font-weight:400;word-spacing:-1.5px"><span id="t84" style="letter-spacing:0.162px">Среднее значение</span></div>
<div class="a t" style="left:53px;width:600px;text-align:right;top:492.69px;font-size:11px;line-height:11px;color:#444;font-weight:400;letter-spacing:-0.18px"><span id="t85" style="">85 741 163,78</span></div>
<div class="a t" style="left:171px;width:600px;text-align:right;top:492.69px;font-size:11px;line-height:11px;color:#444;font-weight:400;letter-spacing:-0.18px"><span id="t86" style="">101 517 328,95</span></div>
<div class="a t" style="left:289px;width:600px;text-align:right;top:492.69px;font-size:11px;line-height:11px;color:#444;font-weight:400;letter-spacing:-0.18px"><span id="t87" style="">103 307 662,49</span></div>
<div class="a t" style="left:407px;width:600px;text-align:right;top:492.69px;font-size:11px;line-height:11px;color:#444;font-weight:400;letter-spacing:-0.18px"><span id="t88" style="">122 250 781,76</span></div>
<div class="a" style="left:355px;top:511px;width:870px;height:1px;background:#cfcfcf"></div>
<div class="a" style="left:1209px;top:352px;width:17px;height:17px;background:#efefef;border:1px solid #dedede;border-radius:3px"></div>
<svg class="a" style="left:1214px;top:359px" width="7" height="4" viewBox="0 0 7 4"><path d="M0 3.5H7L3.5 0Z" fill="#999"/></svg>
<div class="a" style="left:1215px;top:460px;width:6px;height:34px;background:#efefef;border-left:1px solid #dedede;border-right:1px solid #dedede"></div>
<div class="a" style="left:1209px;top:370px;width:17px;height:92px;background:#fff;border:1px solid #dcdcdc;border-radius:3px"></div>
<div class="a" style="left:1209px;top:492px;width:17px;height:18px;background:#fff;border:1px solid #dcdcdc;border-radius:3px"></div>
<svg class="a" style="left:1214px;top:498px" width="7" height="5" viewBox="0 0 7 5"><path d="M0 0H7L3.5 4.0Z" fill="#555"/></svg>
<div class="a" style="left:1226px;top:352px;width:17px;height:17px;background:#efefef;border:1px solid #dedede;border-radius:3px"></div>
<svg class="a" style="left:1231px;top:359px" width="7" height="4" viewBox="0 0 7 4"><path d="M0 3.5H7L3.5 0Z" fill="#999"/></svg>
<div class="a" style="left:1231px;top:602px;width:7px;height:141px;background:#efefef;border-left:1px solid #dedede;border-right:1px solid #dedede"></div>
<div class="a" style="left:1226px;top:370px;width:17px;height:234px;background:#fff;border:1px solid #dcdcdc;border-radius:3px"></div>
<div class="a" style="left:1226px;top:742px;width:17px;height:17px;background:#fff;border:1px solid #dcdcdc;border-radius:3px"></div>
<svg class="a" style="left:1231px;top:748px" width="7" height="5" viewBox="0 0 7 5"><path d="M0 0H7L3.5 4.0Z" fill="#555"/></svg>
<svg class="a" style="left:0px;top:0px" width="1273" height="802" viewBox="0 0 1273 802"><defs><linearGradient id="ag" gradientUnits="userSpaceOnUse" x1="1100" y1="550" x2="1137" y2="743"><stop offset="0" stop-color="#b9e5d6"/><stop offset="1" stop-color="#ddd5b1"/></linearGradient><clipPath id="cc"><rect x="0" y="512" width="1273" height="247"/></clipPath></defs>
<g clip-path="url(#cc)">
<path d="M422.5 529V759" stroke="#dedede"/>
<path d="M521.0 694.3 C554.1 681.0 653.4 633.1 719.7 614.5 C785.9 596.0 852.1 596.2 918.3 583.1 C984.6 570.0 1083.9 543.7 1117.0 535.8 V759 H521.0 Z" fill="url(#ag)"/>
<path d="M423 528.5H521M522 528.5H719M720 528.5H918M919 528.5H1217" stroke="#000" stroke-opacity="0.16" stroke-width="1"/><path d="M423 571.5H521M522 571.5H719M720 571.5H918M919 571.5H1217" stroke="#000" stroke-opacity="0.16" stroke-width="1"/><path d="M423 614.5H521M522 614.5H719M720 614.5H918M919 614.5H1217" stroke="#000" stroke-opacity="0.16" stroke-width="1"/><path d="M423 657.5H521M522 657.5H719M720 657.5H918M919 657.5H1217" stroke="#000" stroke-opacity="0.16" stroke-width="1"/><path d="M423 699.5H521M522 699.5H719M720 699.5H918M919 699.5H1217" stroke="#000" stroke-opacity="0.16" stroke-width="1"/><path d="M423 742.5H521M522 742.5H719M720 742.5H918M919 742.5H1217" stroke="#000" stroke-opacity="0.16" stroke-width="1"/>
<path d="M521.0 694.3 C554.1 681.0 653.4 633.1 719.7 614.5 C785.9 596.0 852.1 596.2 918.3 583.1 C984.6 570.0 1083.9 543.7 1117.0 535.8" fill="none" stroke="#4fbd99" stroke-width="1.8"/>
</g></svg>
<div class="a t" style="left:-186px;width:600px;text-align:right;top:523.69px;font-size:11px;line-height:11px;color:#8a8a8a;font-weight:400;letter-spacing:-0.3px"><span id="t89" style="">160000</span></div>
<div class="a t" style="left:-186px;width:600px;text-align:right;top:566.69px;font-size:11px;line-height:11px;color:#8a8a8a;font-weight:400;letter-spacing:-0.3px"><span id="t90" style="">140000</span></div>
<div class="a t" style="left:-186px;width:600px;text-align:right;top:609.69px;font-size:11px;line-height:11px;color:#8a8a8a;font-weight:400;letter-spacing:-0.3px"><span id="t91" style="">120000</span></div>
<div class="a t" style="left:-186px;width:600px;text-align:right;top:652.69px;font-size:11px;line-height:11px;color:#8a8a8a;font-weight:400;letter-spacing:-0.3px"><span id="t92" style="">100000</span></div>
<div class="a t" style="left:-186px;width:600px;text-align:right;top:694.69px;font-size:11px;line-height:11px;color:#8a8a8a;font-weight:400;letter-spacing:-0.3px"><span id="t93" style="">80000</span></div>
<div class="a t" style="left:-186px;width:600px;text-align:right;top:737.69px;font-size:11px;line-height:11px;color:#8a8a8a;font-weight:400;letter-spacing:-0.3px"><span id="t94" style="">60000</span></div>
<div class="a t" style="left:346px;top:712px;width:52px;height:14px;transform:rotate(-90deg);font-size:12px;line-height:14px;color:#8d8d8d">млн. руб.</div>
<div class="a t" style="left:221.0px;width:600px;text-align:center;top:674.99px;font-size:11px;line-height:11px;color:#333;font-weight:400;letter-spacing:-0.15px"><span id="t95" style="">82 524 510 000</span></div>
<div class="a t" style="left:419.66666666666663px;width:600px;text-align:center;top:595.21px;font-size:11px;line-height:11px;color:#333;font-weight:400;letter-spacing:-0.15px"><span id="t96" style="">119 801 141 000</span></div>
<div class="a t" style="left:618.3333333333333px;width:600px;text-align:center;top:563.80px;font-size:11px;line-height:11px;color:#333;font-weight:400;letter-spacing:-0.15px"><span id="t97" style="">134 481 126 000</span></div>
<div class="a t" style="left:817.0px;width:600px;text-align:center;top:516.48px;font-size:11px;line-height:11px;color:#333;font-weight:400;letter-spacing:-0.15px"><span id="t98" style="">156 594 922 000</span></div>
<div class="a" style="left:419px;top:526px;width:7px;height:7px;background:#c3e0fb;border:1px solid #3d9bf0"></div>
<div class="a" style="left:816px;top:526px;width:7px;height:7px;background:#c3e0fb;border:1px solid #3d9bf0"></div>
<div class="a" style="left:1214px;top:526px;width:7px;height:7px;background:#c3e0fb;border:1px solid #3d9bf0"></div>
<div class="a" style="left:419px;top:719px;width:7px;height:7px;background:#c3e0fb;border:1px solid #3d9bf0"></div>
<div class="a" style="left:1214px;top:719px;width:7px;height:7px;background:#c3e0fb;border:1px solid #3d9bf0"></div>
<div class="a" style="left:1px;top:780px;width:1271px;height:21px;background:#2a8dcc"></div>
<div class="a t" style="left:7px;top:785.69px;font-size:11px;line-height:11px;color:#fff;font-weight:400;"><span id="t99" style="letter-spacing:0.263px">Ожидание...</span></div>
<div class="a t" style="left:1130px;top:785.69px;font-size:11px;line-height:11px;color:#8cc2e8;font-weight:400;"><span id="t100" style="letter-spacing:-0.875px">CAP</span></div>
<div class="a" style="left:1159px;top:782px;width:1px;height:18px;background:#fff"></div>
<div class="a t" style="left:1172px;top:785.69px;font-size:11px;line-height:11px;color:#fff;font-weight:700;"><span id="t101" style="letter-spacing:-0.021px">NUM</span></div>
<div class="a" style="left:1207px;top:782px;width:1px;height:18px;background:#fff"></div>
<div class="a t" style="left:1220px;top:785.69px;font-size:11px;line-height:11px;color:#8cc2e8;font-weight:400;"><span id="t102" style="letter-spacing:-1.336px">SCRL</span></div>
<div class="a" style="left:1254px;top:782px;width:1px;height:18px;background:#fff"></div>
<svg class="a" style="left:1260px;top:789px" width="12" height="12" viewBox="0 0 12 12"><path d="M11 1L1 11M11 5L5 11M11 9L9 11" stroke="#b5d6ee" stroke-width="1"/></svg>
<div class="a" style="left:0px;top:0px;width:1273px;height:802px;border:1px solid #4b4b4b;pointer-events:none"></div>
</body></html>
